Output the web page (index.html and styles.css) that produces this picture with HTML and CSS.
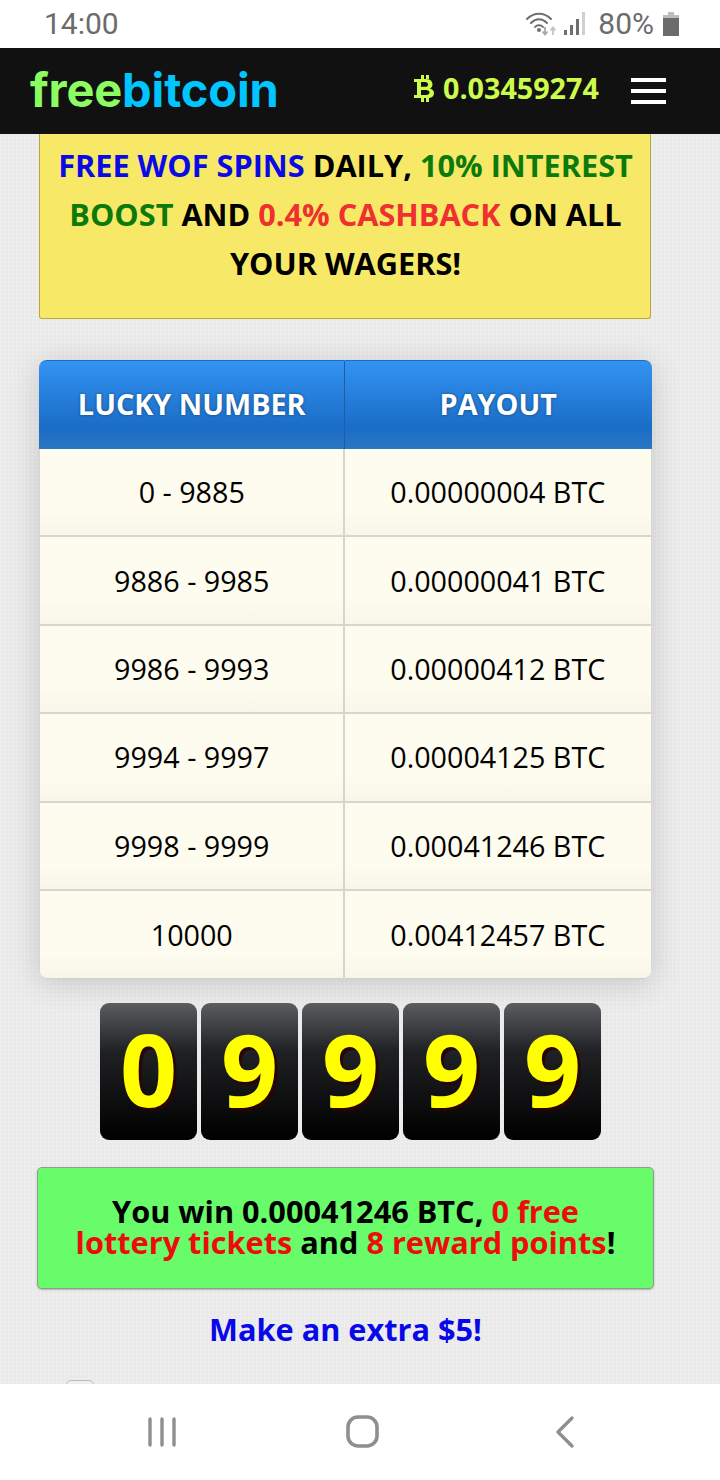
FILE: index.html
```html
<!DOCTYPE html>
<html lang="en">
  <head>
    <meta charset="UTF-8" />
    <meta name="viewport" content="width=device-width, initial-scale=1.0" />
    <title>Free Bitcoin</title>
    <link rel="stylesheet" href="styles.css">
  </head>
  <body>
    <div class="status-bar">
      <span class="clock">14:00</span>
      <div class="status-icons">
        <svg class="wifi-icon" width="34" height="26" viewBox="0 0 34 26">
          <g fill="none" stroke="#6f6f6f" stroke-width="2" stroke-linecap="round">
            <path d="M2 8C9 1 19 1 26 8" />
            <path d="M6 12C11 7 17 7 22 12" />
            <path d="M10 16C12 13.500 16 13.500 18 16" />
          </g>
          <circle cx="14" cy="19" r="2" fill="#6f6f6f" />
          <path d="M20 16v7M17.500 20.500L20 23.500L22.500 20.500" fill="none" stroke="#a8a8a8" stroke-width="1.800" />
          <path d="M28 24v-7M25.500 19.500L28 16.500L30.500 19.500" fill="none" stroke="#c4c4c4" stroke-width="1.800" />
        </svg>
        <svg class="signal-icon" width="22" height="24" viewBox="0 0 22 24">
          <rect x="0" y="18" width="3" height="5" fill="#6f6f6f" />
          <rect x="6" y="13" width="3" height="10" fill="#6f6f6f" />
          <rect x="12" y="7" width="3" height="16" fill="#6f6f6f" />
          <rect x="18" y="0" width="3" height="23" fill="#d0d0d0" />
        </svg>
        <span class="battery-text">80%</span>
        <svg class="battery-icon" width="16" height="24" viewBox="0 0 16 24">
          <path d="M5 0h6v3H5z" fill="#bdbdbd" />
          <path d="M0 3h16v3H0z" fill="#bdbdbd" />
          <path d="M0 6h16v18H0z" fill="#6b6b6b" />
        </svg>
      </div>
    </div>

    <header class="top-bar">
      <div class="logo"><span class="logo-free">free</span><span class="logo-bitcoin">bitcoin</span></div>
      <div class="balance">
        <svg class="btc-icon" width="20" height="27" viewBox="0 0 20 27">
          <path d="M7 0h3v4H7zM12 0h3v4h-3zM7 23h3v4H7zM12 23h3v4h-3z" fill="#cdfb4c" />
          <path fill-rule="evenodd" fill="#cdfb4c" d="M0 4H12C17 4 18.500 7 18.500 9.500C18.500 11.500 17.500 12.800 16 13.400C18.500 14 20 16 20 18C20 21 18 23 13.500 23H0V20H3V7H0ZM7 7V11.800H11C13 11.800 14 10.800 14 9.400C14 8 13 7 11 7ZM7 15V20H12C14 20 15.500 19 15.500 17.500C15.500 16 14 15 12 15Z" />
        </svg>
        <span>0.03459274</span>
      </div>
      <div class="menu-btn"><span></span><span></span><span></span></div>
    </header>

    <main class="page">
      <div class="promo">
        <span class="blue">FREE WOF SPINS</span> DAILY, <span class="green">10% INTEREST BOOST</span> AND <span class="orange">0.4% CASHBACK</span> ON ALL YOUR WAGERS!
      </div>

      <table class="payout-table">
        <thead>
          <tr>
            <th>LUCKY NUMBER</th>
            <th>PAYOUT</th>
          </tr>
        </thead>
        <tbody>
          <tr><td>0 - 9885</td><td>0.00000004 BTC</td></tr>
          <tr><td>9886 - 9985</td><td>0.00000041 BTC</td></tr>
          <tr><td>9986 - 9993</td><td>0.00000412 BTC</td></tr>
          <tr><td>9994 - 9997</td><td>0.00004125 BTC</td></tr>
          <tr><td>9998 - 9999</td><td>0.00041246 BTC</td></tr>
          <tr><td>10000</td><td>0.00412457 BTC</td></tr>
        </tbody>
      </table>

      <div class="digits">
        <div class="digit">0</div>
        <div class="digit">9</div>
        <div class="digit">9</div>
        <div class="digit">9</div>
        <div class="digit">9</div>
      </div>

      <div class="win-box">
        You win 0.00041246 BTC, <span class="red">0 free lottery tickets</span> and <span class="red">8 reward points</span>!
      </div>

      <a class="extra-link" href="#">Make an extra $5!</a>

      <div class="checkbox"></div>
    </main>

    <nav class="nav-bar">
      <svg width="30" height="30" viewBox="0 0 30 30">
        <g stroke="#8f8f8f" stroke-width="3.400" stroke-linecap="round">
          <path d="M3 2v26" />
          <path d="M15 2v26" />
          <path d="M27 2v26" />
        </g>
      </svg>
      <svg width="34" height="34" viewBox="0 0 34 34">
        <rect x="2" y="2" width="29" height="29" rx="10" fill="none" stroke="#8f8f8f" stroke-width="3.600" />
      </svg>
      <svg width="22" height="34" viewBox="0 0 22 34">
        <path d="M18 3L4 17L18 31" fill="none" stroke="#8f8f8f" stroke-width="3.400" stroke-linecap="round" stroke-linejoin="round" />
      </svg>
    </nav>
  </body>
</html>
```

FILE: styles.css
```css
* {
  box-sizing: border-box;
}
html,
body {
  margin: 0;
  padding: 0;
  height: 1480px;
  overflow: hidden;
}
body {
  display: flex;
  flex-direction: column;
  font-family: "Open Sans", sans-serif;
  background: #e9e9e9;
  color: #000;
}

/* phone status bar */
.status-bar {
  height: 48px;
  flex: none;
  background: #fff;
  display: flex;
  align-items: center;
  justify-content: space-between;
  padding: 0 41px 1px 44px;
  color: #6b6b6b;
  font-family: Roboto, sans-serif;
  font-size: 30px;
}
.clock {
  line-height: 48px;
}
.status-icons {
  display: flex;
  align-items: center;
}
.wifi-icon {
  margin-right: 5px;
}
.signal-icon {
  margin-right: 12px;
}
.battery-text {
  margin-right: 9px;
}

/* site header */
.top-bar {
  height: 86px;
  flex: none;
  background: #111;
  display: flex;
  align-items: center;
  padding: 0 54px 0 30px;
}
.logo {
  font-family: Inter, "Open Sans", sans-serif;
  font-weight: 700;
  font-size: 47px;
  letter-spacing: -0.150px;
  line-height: 84px;
  height: 86px;
  width: 385px;
}
.logo-free {
  color: #8cfc62;
}
.logo-bitcoin {
  color: #00c5ff;
}
.balance {
  display: flex;
  align-items: center;
  color: #cdfb4c;
  font-weight: 700;
  font-size: 28.700px;
  white-space: nowrap;
  margin-bottom: 7px;
}
.btc-icon {
  margin: 2px 9px 0 -1px;
}
.menu-btn {
  margin-left: auto;
  width: 35px;
  display: flex;
  flex-direction: column;
  gap: 7px;
}
.menu-btn span {
  display: block;
  height: 4px;
  background: #fff;
}

/* content */
.page {
  flex: 1;
  overflow: hidden;
  display: flex;
  flex-direction: column;
  align-items: center;
  padding: 0 29px 0 0;
  background-color: #e9e9e9;
  background-image: linear-gradient(#eee 1px, transparent 1px), linear-gradient(90deg, #eee 1px, transparent 1px);
  background-size: 4px 4px;
}
.promo {
  flex: none;
  width: 612px;
  height: 185px;
  margin-right: 1px;
  padding: 7px 9.500px 0 10.500px;
  background: #f7e967;
  border: 1px solid #b8aa38;
  border-top: none;
  border-radius: 0 0 3px 3px;
  text-align: center;
  font-size: 30.700px;
  font-weight: 700;
  line-height: 49px;
}
.blue {
  color: #0a0ae6;
}
.green {
  color: #0b7a0b;
}
.orange {
  color: #ee3030;
}
.payout-table {
  flex: none;
  width: 613px;
  height: 618px;
  margin-top: 41px;
  border-collapse: separate;
  border-spacing: 0;
  table-layout: fixed;
  border-radius: 8px;
  box-shadow: 0 4px 30px rgba(0, 0, 0, 0.16);
  background: #fdfbee;
}
.payout-table th {
  height: 89px;
  padding: 0 0 3px;
  color: #fff;
  font-size: 28.800px;
  font-weight: 700;
  text-shadow: 0 0 3px rgba(0, 0, 0, 0.45);
  background: linear-gradient(#3393f3, #1a6dc6 75%, #2a76c4);
  border-top: 1px solid #1d6cc0;
  border-right: 1px solid #1c5fa8;
}
.payout-table th:first-child {
  width: 305.500px;
  padding-left: 1px;
  border-radius: 8px 0 0 0;
}
.payout-table th:last-child {
  border-radius: 0 8px 0 0;
  border-right: none;
}
.payout-table td {
  height: 88.400px;
  padding: 0 0 1px;
  text-align: center;
  font-size: 28.700px;
  background: linear-gradient(#fefcef 70%, #f8f6e9);
  border-right: 2px solid #d6d6d0;
  border-bottom: 2px solid #d6d6d0;
}
.payout-table td:first-child {
  padding-left: 1px;
  border-left: 1px solid #d8d8d2;
}
.payout-table td:last-child {
  border-right: 1px solid #d8d8d2;
}
.payout-table tr:last-child td {
  border-bottom: 1px solid #d0d0ca;
}
.payout-table tr:last-child td:first-child {
  border-radius: 0 0 0 8px;
}
.payout-table tr:last-child td:last-child {
  border-radius: 0 0 8px 0;
}
.digits {
  flex: none;
  display: flex;
  gap: 4px;
  margin: 24px 0 0 10px;
}
.digit {
  width: 97px;
  height: 137px;
  border-radius: 9px;
  background: linear-gradient(#5b5d60, #202124 35%, #000);
  color: #ff0;
  font-size: 100px;
  font-weight: 700;
  line-height: 131px;
  text-align: center;
  text-shadow: 3px 3px 0 #2a0505;
}
.win-box {
  flex: none;
  width: 617px;
  height: 122px;
  margin-top: 27px;
  padding: 28px 30px 0;
  background: #68fb6a;
  border: 1px solid #8f9d8f;
  border-radius: 5px;
  box-shadow: 0 1px 2px rgba(0, 0, 0, 0.25);
  text-align: center;
  font-size: 30.700px;
  font-weight: 700;
  line-height: 31px;
}
.red {
  color: #ee0b0b;
}
.extra-link {
  flex: none;
  margin-top: 19px;
  color: #0808e8;
  font-size: 30.700px;
  font-weight: 700;
  line-height: 42px;
  text-decoration: none;
}
.checkbox {
  flex: none;
  align-self: flex-start;
  width: 28px;
  height: 28px;
  margin: 30px 0 0 66px;
  background: #eee;
  border: 1px solid #bbb;
  border-radius: 5px;
}

/* phone nav bar */
.nav-bar {
  height: 96px;
  flex: none;
  background: #fff;
  display: flex;
  align-items: center;
  padding: 0 0 1px;
}
.nav-bar svg:nth-child(1) {
  margin-left: 147px;
}
.nav-bar svg:nth-child(2) {
  margin-left: 169px;
}
.nav-bar svg:nth-child(3) {
  margin-left: 174px;
}
```
